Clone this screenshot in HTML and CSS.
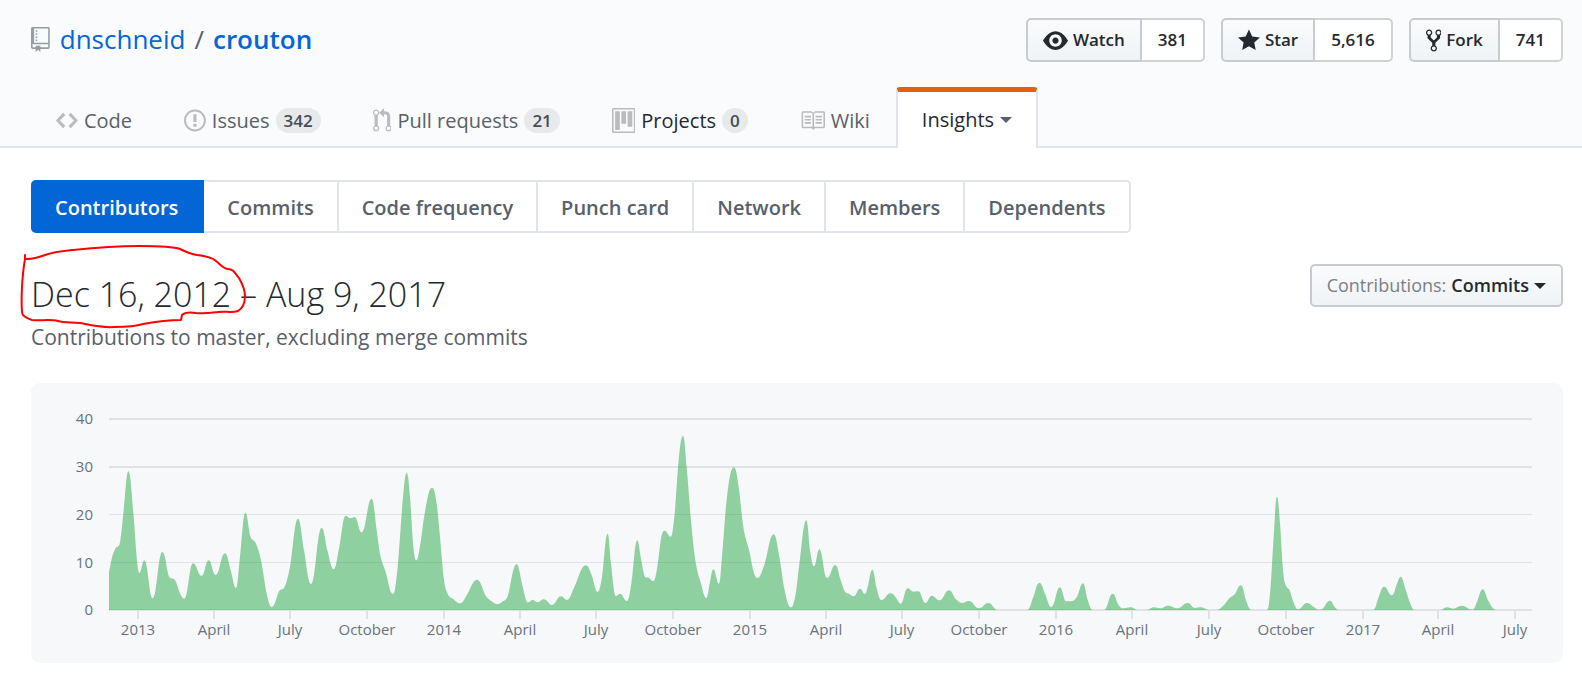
FILE: index.html
```html
<!DOCTYPE html>
<html lang="en">
<head>
<meta charset="utf-8">
<title>Contributors to dnschneid/crouton</title>
<link rel="stylesheet" href="styles.css">
</head>
<body>
<header class="repo-header">
  <div class="repo-top">
    <h1 class="repo-title">
      <svg class="icon repo-icon" viewBox="0 0 12 16" aria-hidden="true"><path d="M4 9H3V8h1v1zm0-3H3v1h1V6zm0-2H3v1h1V4zm0-2H3v1h1V2zm8-1v12c0 .55-.45 1-1 1H6v2l-1.5-1.5L3 16v-2H1c-.55 0-1-.45-1-1V1c0-.55.45-1 1-1h10c.55 0 1 .45 1 1zm-1 10H1v2h2v-1h3v1h5v-2zm0-10H2v9h9V1z"/></svg>
      <a href="#owner">dnschneid</a><span class="slash">/</span><a class="repo-name" href="#repo">crouton</a>
    </h1>
    <ul class="actions">
      <li class="action">
        <button class="action-button" type="button"><svg class="icon" viewBox="0 0 16 16" aria-hidden="true"><path d="M8.06 2C3 2 0 8 0 8s3 6 8.06 6C13 14 16 8 16 8s-3-6-7.94-6zM8 12c-2.2 0-4-1.78-4-4 0-2.2 1.8-4 4-4 2.22 0 4 1.8 4 4 0 2.22-1.78 4-4 4zm2-4c0 1.11-.89 2-2 2-1.11 0-2-.89-2-2 0-1.11.89-2 2-2 1.11 0 2 .89 2 2z"/></svg>Watch</button>
        <a class="action-count" href="#watchers">381</a>
      </li>
      <li class="action">
        <button class="action-button" type="button"><svg class="icon" viewBox="0 0 14 16" aria-hidden="true"><path d="M14 6l-4.900-.64L7 1 4.900 5.360 0 6l3.600 3.260L2.670 14 7 11.670 11.330 14l-.93-4.740z"/></svg>Star</button>
        <a class="action-count" href="#stars">5,616</a>
      </li>
      <li class="action">
        <button class="action-button" type="button"><svg class="icon" viewBox="0 0 10 16" aria-hidden="true"><path d="M8 1a1.993 1.993 0 0 0-1 3.720V6L5 8 3 6V4.720A1.993 1.993 0 0 0 2 1a1.993 1.993 0 0 0-1 3.720V6.500l3 3v1.780A1.993 1.993 0 0 0 5 15a1.993 1.993 0 0 0 1-3.720V9.500l3-3V4.720A1.993 1.993 0 0 0 8 1zM2 4.200C1.340 4.200.8 3.650.8 3c0-.65.55-1.200 1.200-1.200.65 0 1.200.55 1.200 1.200 0 .65-.55 1.200-1.200 1.200zm3 10c-.66 0-1.200-.55-1.200-1.200 0-.65.55-1.200 1.200-1.200.65 0 1.200.55 1.200 1.200 0 .65-.55 1.200-1.200 1.200zm3-10c-.66 0-1.200-.55-1.200-1.200 0-.65.55-1.200 1.200-1.200.65 0 1.200.55 1.200 1.200 0 .65-.55 1.200-1.200 1.200z"/></svg>Fork</button>
        <a class="action-count" href="#forks">741</a>
      </li>
    </ul>
  </div>
  <nav class="tabs" aria-label="Repository">
    <a class="tab" href="#code"><svg class="icon" viewBox="0 0 14 16" aria-hidden="true"><path d="M9.500 3L8 4.500 11.500 8 8 11.500 9.500 13 14 8 9.500 3zm-5 0L0 8l4.500 5L6 11.500 2.500 8 6 4.500 4.500 3z"/></svg>Code</a>
    <a class="tab" href="#issues"><svg class="icon" viewBox="0 0 14 16" aria-hidden="true"><path d="M7 2.300c3.140 0 5.700 2.560 5.700 5.700s-2.560 5.700-5.700 5.700A5.710 5.710 0 0 1 1.300 8c0-3.140 2.560-5.700 5.700-5.700zM7 1C3.140 1 0 4.140 0 8s3.140 7 7 7 7-3.140 7-7-3.140-7-7-7zm1 3H6v5h2V4zm0 6H6v2h2v-2z"/></svg>Issues<span class="counter">342</span></a>
    <a class="tab" href="#pulls"><svg class="icon" viewBox="0 0 12 16" aria-hidden="true"><path d="M11 11.280V5c-.03-.78-.34-1.470-.94-2.060C9.460 2.350 8.780 2.030 8 2H7V0L4 3l3 3V4h1c.27.02.48.11.69.31.21.2.3.42.31.69v6.280A1.993 1.993 0 0 0 10 15a1.993 1.993 0 0 0 1-3.720zm-1 2.920c-.66 0-1.200-.55-1.200-1.200 0-.65.55-1.200 1.200-1.200.65 0 1.200.55 1.200 1.200 0 .65-.55 1.200-1.200 1.200zM4 3c0-1.110-.89-2-2-2a1.993 1.993 0 0 0-1 3.720v6.560A1.993 1.993 0 0 0 2 15a1.993 1.993 0 0 0 1-3.720V4.720c.59-.34 1-.98 1-1.720zm-.8 10c0 .66-.55 1.200-1.200 1.200-.65 0-1.200-.55-1.200-1.200 0-.65.55-1.200 1.200-1.200.65 0 1.200.55 1.200 1.200zM2 4.200C1.340 4.200.8 3.650.8 3c0-.65.55-1.200 1.200-1.200.65 0 1.200.55 1.200 1.200 0 .65-.55 1.200-1.200 1.200z"/></svg>Pull requests<span class="counter">21</span></a>
    <a class="tab tab-dark" href="#projects"><svg class="icon" viewBox="0 0 15 16" aria-hidden="true"><path fill-rule="evenodd" d="M10 12h3V2h-3v10zm-4-2h3V2H6v8zm-4 4h3V2H2v12zm-1 1h13V1H1v14zM14 0H1a1 1 0 0 0-1 1v14a1 1 0 0 0 1 1h13a1 1 0 0 0 1-1V1a1 1 0 0 0-1-1z"/></svg>Projects<span class="counter">0</span></a>
    <a class="tab" href="#wiki"><svg class="icon" viewBox="0 0 16 16" aria-hidden="true"><path d="M3 5h4v1H3V5zm0 3h4V7H3v1zm0 2h4V9H3v1zm11-5h-4v1h4V5zm0 2h-4v1h4V7zm0 2h-4v1h4V9zm2-6v9c0 .55-.45 1-1 1H9.500l-1 1-1-1H2c-.55 0-1-.45-1-1V3c0-.55.45-1 1-1h5.500l1 1 1-1H15c.55 0 1 .45 1 1zm-8 .5L7.500 3H2v9h6V3.500zm7-.5H9.500l-.5.5V12h6V3z"/></svg>Wiki</a>
    <button class="tab tab-selected" type="button" aria-haspopup="true">Insights<span class="caret"></span></button>
  </nav>
</header>

<main class="content">
  <nav class="subnav" aria-label="Insights">
    <a class="subnav-item subnav-selected" href="#contributors" aria-current="page">Contributors</a>
    <a class="subnav-item" href="#commits">Commits</a>
    <a class="subnav-item" href="#frequency">Code frequency</a>
    <a class="subnav-item" href="#punch-card">Punch card</a>
    <a class="subnav-item" href="#network">Network</a>
    <a class="subnav-item" href="#members">Members</a>
    <a class="subnav-item" href="#dependents">Dependents</a>
  </nav>

  <div class="range">
    <div class="range-text">
      <h2 class="range-title">Dec 16, 2012 – Aug 9, 2017</h2>
      <p class="range-note">Contributions to master, excluding merge commits</p>
      <svg class="marker" viewBox="0 0 232 92" aria-hidden="true"><path d="M5 15V19C12 19 17 18 22 16C32 12 43 11 53 10C72 8 96 6 119 6C135 6 152 6 160 9C166 12 170 14 177 15C186 16 192 17 196 21C201 25 204 29 208 29C213 29 215 33 219 38C223 45 225 50 225 56C225 62 223 68 218 71C212 73 205 71 198 72C190 73 184 74 176 73C170 72 165 72 162 75L161 80C148 80 134 82 123 84C114 87 104 87 94 87C82 88 70 85 60 83C50 82 45 83 38 81C30 79 20 81 12 80C6 78 2 75 2 72C1 59 2 36 5 19"/></svg>
    </div>
    <button class="filter" type="button" aria-haspopup="true"><span class="filter-label">Contributions:</span> Commits<span class="caret"></span></button>
  </div>

  <section class="chart-panel" aria-label="Commits over time">
    <svg class="chart" id="chart" viewBox="0 0 1532 280" role="img" aria-label="Commits to master per week"></svg>
  </section>
</main>
<script src="chart.js"></script>
</body>
</html>
```
FILE: styles.css
```css
* {
  box-sizing: border-box;
}

body {
  margin: 0;
  background: #fff;
  color: #24292e;
  font-family: "Open Sans", "Noto Sans", sans-serif;
  font-size: 20px;
  line-height: 30px;
}

a {
  color: inherit;
  text-decoration: none;
}

button {
  margin: 0;
  font: inherit;
  color: inherit;
  cursor: pointer;
}

.icon {
  display: block;
  flex: none;
  height: 25px;
  fill: currentColor;
}

.repo-header {
  background: #fafbfc;
  border-bottom: 2px solid #e1e4e8;
}

.repo-top {
  display: flex;
  justify-content: space-between;
  align-items: flex-start;
  padding: 18px 19px 0 31px;
}

.repo-title {
  display: flex;
  align-items: center;
  margin: 0;
  font-size: 26px;
  font-weight: 400;
  line-height: 42px;
  color: #0366d6;
}

.repo-icon {
  margin-right: 10px;
  color: #959da5;
}

.slash {
  margin: 0 9px;
  color: #586069;
}

.repo-name {
  font-weight: 600;
}

.actions {
  display: flex;
  gap: 16px;
  margin: 0;
  padding: 0;
  list-style: none;
  font-size: 17px;
  font-weight: 600;
  line-height: 40px;
}

.action {
  display: flex;
}

.action-button {
  display: flex;
  align-items: center;
  gap: 5px;
  padding: 0 15px;
  border: 2px solid #c8cbcf;
  border-radius: 5px 0 0 5px;
  background: linear-gradient(#fafbfc, #eff3f6);
}

.action-count {
  padding: 0 16px;
  border: 2px solid #d1d2d3;
  border-left: 0;
  border-radius: 0 5px 5px 0;
  background: #fff;
}

.tabs {
  display: flex;
  margin: 25px 0 -2px;
  padding-left: 30px;
}

.tab {
  display: flex;
  align-items: center;
  padding: 4px 24px 0;
  border: 2px solid transparent;
  border-bottom: 0;
  color: #586069;
}

.tab .icon {
  margin-right: 6px;
  color: #b9bbbd;
}

.tab-dark {
  color: #24292e;
}

.counter {
  margin-left: 6px;
  padding: 0 8px;
  border-radius: 13px;
  background: #e7e9eb;
  color: #444d56;
  font-size: 17px;
  font-weight: 600;
  line-height: 25px;
}

.tab-selected {
  height: 61px;
  padding-top: 0;
  border-color: #e1e4e8;
  border-top: 5px solid #e36209;
  border-radius: 4px 4px 0 0;
  background: #fff;
  color: #24292e;
}

.caret {
  margin-left: 6px;
  border: 6px solid transparent;
  border-top-color: currentColor;
  border-bottom: 0;
}

.tab-selected .caret {
  color: #586069;
}

.content {
  padding: 32px 19px 12px 31px;
}

.subnav {
  display: flex;
  font-weight: 600;
  color: #586069;
}

.subnav-item {
  padding: 11px 23px 8px;
  border: 2px solid #e1e4e8;
  border-left: 0;
}

.subnav-item:last-child {
  border-radius: 0 5px 5px 0;
}

.subnav-selected {
  padding: 11px 24px 8px;
  border-color: #0366d6;
  border-radius: 5px 0 0 5px;
  background: #0366d6;
  color: #fff;
}

.range {
  display: flex;
  justify-content: space-between;
  align-items: flex-start;
  padding-top: 31px;
}

.range-text {
  position: relative;
}

.range-title {
  margin: 4px 0 0;
  font-size: 34px;
  font-weight: 300;
  line-height: 52px;
}

.range-note {
  margin: 2px 0 0;
  color: #586069;
  font-size: 21px;
}

.marker {
  position: absolute;
  left: -11px;
  top: -24px;
  width: 232px;
  fill: none;
  stroke: #f00;
  stroke-width: 2;
  stroke-linejoin: round;
  stroke-linecap: round;
}

.filter {
  display: flex;
  align-items: center;
  gap: 5px;
  padding: 0 15px;
  border: 2px solid #c8cbcf;
  border-radius: 5px;
  background: linear-gradient(#fafbfc, #eff3f6);
  font-size: 18px;
  font-weight: 600;
  line-height: 39px;
}

.filter-label {
  color: #7b8084;
  font-weight: 400;
}

.filter .caret {
  margin-left: 0;
}

.chart-panel {
  margin-top: 31px;
  border-radius: 9px;
  background: #f6f8fa;
}

.chart {
  display: block;
  width: 100%;
}

.grid-line {
  stroke: #e1e2e4;
  shape-rendering: crispEdges;
}

.area {
  fill: #28a745;
  fill-opacity: 0.5;
}

.axis-text {
  fill: #6a737d;
  font-size: 15px;
}
```
FILE: chart.js
```js
// Outline of the area as x, y pairs, three units to a pixel, one group per
// stretch of the time axis. The first number is where the group starts.
const groups = [
  [0, [267,605, 278,555, 288,532, 299,520, 312,410, 325,303, 341,440, 350,560, 358,608, 373,570, 398,684, 427,545, 448,620, 464,628, 493,685, 519,579, 545,617, 566,570, 587,614, 615,549, 632,600, 648,653, 660,560, 676,427, 691,498, 707,518, 723,570, 740,670, 755,710, 778,662, 795,648, 810,590, 834,445, 852,540, 873,641, 905,472, 922,540, 941,597, 958,530, 977,436, 991,444, 1004,440, 1025,486, 1055,385, 1070,480, 1080,550, 1097,605, 1119,671, 1131,610]],
  [1140, [0,500, 9,380, 20,308, 30,380, 40,530, 49,570, 58,540, 74,430, 96,352, 110,400, 120,500, 132,630, 143,670, 160,686, 181,699, 200,675, 231,628, 258,678, 275,693, 290,701, 307,694, 322,680, 350,582, 366,640, 384,696, 398,689, 413,696, 431,687, 456,704, 483,678, 501,689, 524,648, 558,585, 575,615, 593,665, 606,620, 623,490, 633,580, 648,677, 660,670, 681,692, 694,640, 712,510, 722,560, 736,621, 746,622, 760,632, 772,590, 784,500, 794,481, 812,499, 824,430, 836,270, 849,197, 860,290, 872,440, 886,570, 903,640, 919,683, 929,640, 940,597, 957,640, 966,560, 980,390, 1002,291, 1016,350, 1030,470, 1046,535, 1072,623, 1094,580, 1121,492, 1138,560, 1154,660, 1173,711, 1187,670]],
  [2340, [0,565, 19,450, 30,540, 42,588, 58,537, 81,623, 106,584, 122,630, 136,666, 148,671, 161,678, 180,655, 195,671, 203,650, 217,598, 229,650, 244,689, 272,669, 290,685, 302,700, 323,654, 340,664, 355,663, 376,698, 395,676, 419,690, 447,660, 468,687, 486,698, 507,692, 537,714, 565,698, 593,719, 682,719, 700,680, 718,637, 735,670, 754,710, 780,651, 798,693, 820,691, 832,678, 849,639, 862,685, 878,719, 912,719, 938,670, 955,703, 970,714, 992,711, 1012,719, 1040,719, 1062,711, 1080,714, 1105,706, 1132,714]],
  [3486, [17,698, 39,713, 57,711, 80,719, 105,719, 122,708, 143,683, 158,672, 177,645, 192,690, 208,719, 255,719, 265,660, 275,500, 285,379, 294,460, 304,610, 314,650, 322,658, 335,697, 348,717, 375,698, 395,710, 412,718, 422,715, 444,691, 458,710, 470,719, 574,719, 590,680, 606,649, 630,675, 645,640, 656,619, 670,655, 685,700, 698,719, 775,719, 795,711, 813,715, 839,706, 872,718, 885,695, 902,657, 918,690, 943,719, 1050,719]]
];

const LEFT = 78;
const RIGHT = 1501;
const BASE = 227;

const points = groups.flatMap(([start, list]) => {
  const out = [];
  for (let i = 0; i < list.length; i += 2) {
    out.push([LEFT + (start + list[i] - 267) / 3, BASE - (719 - list[i + 1]) / 3]);
  }
  return out;
});

// Monotone cubic curve: peaks and valleys stay level, so nothing overshoots.
function curve(pts) {
  const slope = pts.slice(1).map((p, i) => (p[1] - pts[i][1]) / (p[0] - pts[i][0]));
  const tangent = pts.map((p, i) => {
    const a = slope[i - 1];
    const b = slope[i];
    if (a === undefined) return b;
    if (b === undefined) return a;
    if (a * b <= 0) return 0;
    const size = Math.min(Math.abs(a + b) / 2, 3 * Math.abs(a), 3 * Math.abs(b));
    return Math.sign(a) * size;
  });
  let d = "M" + pts[0].join(" ");
  for (let i = 1; i < pts.length; i++) {
    const [x0, y0] = pts[i - 1];
    const [x1, y1] = pts[i];
    // Level ends get a longer handle, which rounds the peaks.
    const w = x1 - x0;
    const h0 = tangent[i - 1] === 0 ? w * 0.45 : w / 3;
    const h1 = tangent[i] === 0 ? w * 0.45 : w / 3;
    d += `C${x0 + h0} ${y0 + tangent[i - 1] * h0} ${x1 - h1} ${y1 - tangent[i] * h1} ${x1} ${y1}`;
  }
  return d;
}

const chart = document.getElementById("chart");

function add(name, attributes, text) {
  const node = document.createElementNS("http://www.w3.org/2000/svg", name);
  for (const key in attributes) node.setAttribute(key, attributes[key]);
  if (text !== undefined) node.textContent = text;
  chart.append(node);
}

[[40, 36, 2], [30, 84, 2], [20, 131.5, 1], [10, 179.5, 1], [0, 227, 2]].forEach(([value, y, width]) => {
  add("line", { class: "grid-line", x1: LEFT, x2: RIGHT, y1: y, y2: y, "stroke-width": width });
  add("text", { class: "axis-text", x: 62, y: y + 5, "text-anchor": "end" }, value);
});

[["2013", 107], ["April", 183], ["July", 259], ["October", 336], ["2014", 413], ["April", 489],
 ["July", 565], ["October", 642], ["2015", 719], ["April", 795], ["July", 871], ["October", 948],
 ["2016", 1025], ["April", 1101], ["July", 1178], ["October", 1255], ["2017", 1332], ["April", 1407],
 ["July", 1484]].forEach(([label, x]) => {
  add("line", { class: "grid-line", x1: x, x2: x, y1: 228, y2: 236, "stroke-width": 2 });
  add("text", { class: "axis-text", x: x, y: 252, "text-anchor": "middle" }, label);
});

add("path", { class: "area", d: `${curve(points)}V${BASE}H${LEFT}Z` });
```
